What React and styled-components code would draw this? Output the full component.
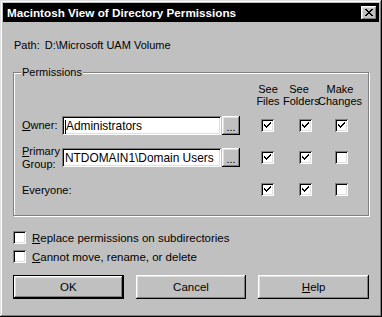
import React from "react";
import styled, { createGlobalStyle } from "styled-components";

const Global = createGlobalStyle`
  html, body { margin: 0; padding: 0; background: #c0c0c0; }
  body { font-family: "Liberation Sans", Arial, sans-serif; font-size: 11px; color: #000; }
`;

const raised = `
  box-shadow: inset -1px -1px 0 #000, inset 1px 1px 0 #fff, inset -2px -2px 0 #808080, inset 2px 2px 0 #dfdfdf;
`;
const sunken = `
  box-shadow: inset 1px 1px 0 #808080, inset -1px -1px 0 #fff, inset 2px 2px 0 #000, inset -2px -2px 0 #dfdfdf;
`;

const Window = styled.div`
  width: 382px;
  height: 317px;
  box-sizing: border-box;
  padding: 3px;
  background: #c0c0c0;
  box-shadow: inset -1px -1px 0 #000, inset 1px 1px 0 #dfdfdf, inset -2px -2px 0 #808080, inset 2px 2px 0 #fff;
  display: flex;
  flex-direction: column;
`;

const TitleBar = styled.div`
  height: 19px;
  background: #000;
  display: flex;
  align-items: center;
  justify-content: space-between;
  padding: 0 2px 0 4px;
  color: #fff;
  font-weight: bold;
  font-size: 11.7px;
`;

const CloseButton = styled.div`
  width: 16px;
  height: 14px;
  background: #c0c0c0;
  ${raised}
  display: flex;
  align-items: center;
  justify-content: center;
`;

const Body = styled.div`
  padding: 0 10px;
  display: flex;
  flex-direction: column;
`;

const PathLine = styled.div`
  margin-top: 16px;
  line-height: 14px;
  padding-left: 1px;
  display: flex;
  gap: 5px;
`;

const GroupBox = styled.div`
  position: relative;
  margin-top: 20px;
  border: 1px solid #808080;
  box-shadow: inset 1px 1px 0 #fff, 1px 1px 0 #fff;
  padding: 10px 0 16px 8px;
`;

const Caption = styled.span`
  position: absolute;
  top: -7px;
  left: 7px;
  padding: 0 1px;
  background: #c0c0c0;
  line-height: 13px;
`;

const Headers = styled.div`
  display: flex;
  justify-content: flex-end;
  padding-right: 3px;
  line-height: 12px;
`;

const HeaderCell = styled.div`
  width: ${(p) => p.$w}px;
  text-align: center;
`;

const Rows = styled.div`
  margin-top: 9px;
  display: grid;
  grid-template-columns: 40px 160px 18px 34px 38px 36px;
  grid-auto-rows: 19px;
  row-gap: 13px;
  align-items: center;
`;

const RowLabel = styled.div`
  line-height: 13px;
  grid-column: ${(p) => p.$span || "auto"};
  padding-top: ${(p) => p.$drop || 0}px;
`;

const TextBox = styled.div`
  width: 159px;
  height: 19px;
  box-sizing: border-box;
  background: #fff;
  ${sunken}
  padding: 0 3px;
  display: flex;
  align-items: center;
  font-size: 11.9px;
  white-space: nowrap;
  overflow: hidden;
`;

const Caret = styled.span`
  width: 1px;
  height: 14px;
  margin-top: 2px;
  background: #000;
`;

const DotsButton = styled.div`
  width: 18px;
  height: 19px;
  box-sizing: border-box;
  background: #c0c0c0;
  ${raised}
  display: flex;
  align-items: flex-end;
  justify-content: center;
  padding-bottom: 4px;
  line-height: 8px;
`;

const CheckCell = styled.div`
  display: flex;
  justify-content: flex-end;
`;

const Box = styled.div`
  width: 13px;
  height: 13px;
  box-sizing: border-box;
  background: #fff;
  ${sunken}
  display: flex;
  align-items: center;
  justify-content: center;
`;

const Options = styled.div`
  margin-top: 15px;
  display: flex;
  flex-direction: column;
  gap: 6px;
`;

const Option = styled.div`
  display: flex;
  align-items: center;
  gap: 6px;
  height: 13px;
  font-size: 11.5px;
`;

const ButtonRow = styled.div`
  margin-top: 12px;
  display: flex;
  gap: 12px;
`;

const Button = styled.div`
  width: 111px;
  height: 24px;
  box-sizing: border-box;
  background: #c0c0c0;
  display: flex;
  align-items: center;
  justify-content: center;
  font-size: 11.5px;
  ${raised}
  ${(p) => p.$default && `border: 1px solid #000;`}
`;

const Check = () => (
  <svg width="7" height="7" viewBox="0 0 7 7">
    <path d="M0 2h1v1h1v1h1v-1h1v-1h1v-1h1v-1h1v2h-1v1h-1v1h-1v1h-1v1h-1v-1h-1v-1h-1z" fill="#000" />
  </svg>
);

const CheckBox = ({ on }) => <Box>{on && <Check />}</Box>;

const CloseX = () => (
  <svg width="8" height="7" viewBox="0 0 8 7">
    <path d="M0 0h2v1h1v1h2v-1h1v-1h2v1h-1v1h-1v1h-1v1h1v1h1v1h1v1h-2v-1h-1v-1h-2v1h-1v1h-2v-1h1v-1h1v-1h1v-1h-1v-1h-1v-1h-1z" fill="#000" />
  </svg>
);

const rows = [
  { key: "owner", label: <><u>O</u>wner:</>, value: "Administrators", caret: true, checks: [true, true, true] },
  { key: "group", label: <><u>P</u>rimary<br />Group:</>, value: "NTDOMAIN1\\Domain Users", checks: [true, true, false] },
];

export default function App() {
  return (
    <>
      <Global />
      <Window>
        <TitleBar>
          <span>Macintosh View of Directory Permissions</span>
          <CloseButton><CloseX /></CloseButton>
        </TitleBar>
        <Body>
          <PathLine>
            <span>Path:</span>
            <span>D:\Microsoft UAM Volume</span>
          </PathLine>
          <GroupBox>
            <Caption>Permissions</Caption>
            <Headers>
              <HeaderCell $w={30}>See<br />Files</HeaderCell>
              <HeaderCell $w={32}>See<br />Folders</HeaderCell>
              <HeaderCell $w={50}>Make<br />Changes</HeaderCell>
            </Headers>
            <Rows>
              {rows.map((r) => (
                <React.Fragment key={r.key}>
                  <RowLabel>{r.label}</RowLabel>
                  <TextBox>
                    {r.caret && <Caret />}
                    {r.value}
                  </TextBox>
                  <DotsButton>...</DotsButton>
                  {r.checks.map((c, i) => (
                    <CheckCell key={i}><CheckBox on={c} /></CheckCell>
                  ))}
                </React.Fragment>
              ))}
              <RowLabel $span="1 / 4" $drop={2}>Everyone:</RowLabel>
              {[true, true, false].map((c, i) => (
                <CheckCell key={i}><CheckBox on={c} /></CheckCell>
              ))}
            </Rows>
          </GroupBox>
          <Options>
            <Option><CheckBox /><span><u>R</u>eplace permissions on subdirectories</span></Option>
            <Option><CheckBox /><span><u>C</u>annot move, rename, or delete</span></Option>
          </Options>
          <ButtonRow>
            <Button $default>OK</Button>
            <Button>Cancel</Button>
            <Button><span><u>H</u>elp</span></Button>
          </ButtonRow>
        </Body>
      </Window>
    </>
  );
}
